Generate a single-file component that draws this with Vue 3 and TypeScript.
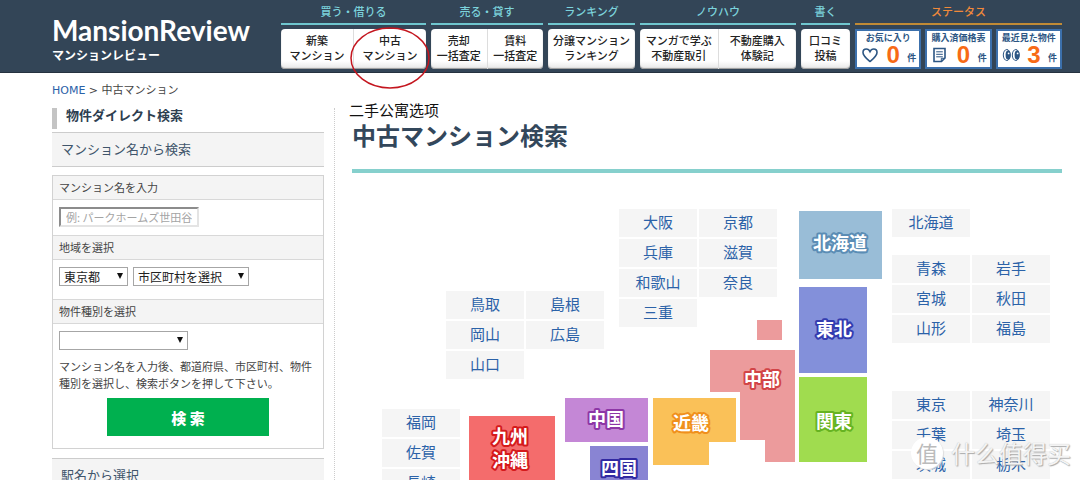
<script setup lang="ts">
import { ref } from 'vue'

interface NavItem { lines: string[]; current?: boolean }
interface NavGroup { title: string; size: string; items: NavItem[] }
interface PrefGroup { name: string; x: number; y: number; prefs: string[] }
interface Region { id: string; points: string; labels: { text: string; x: number; y: number }[] }

const navGroups: NavGroup[] = [
  { title: '買う・借りる', size: 'buy', items: [{ lines: ['新築', 'マンション'] }, { lines: ['中古', 'マンション'], current: true }] },
  { title: '売る・貸す', size: 'sell', items: [{ lines: ['売却', '一括査定'] }, { lines: ['賃料', '一括査定'] }] },
  { title: 'ランキング', size: 'rank', items: [{ lines: ['分譲マンション', 'ランキング'] }] },
  { title: 'ノウハウ', size: 'know', items: [{ lines: ['マンガで学ぶ', '不動産取引'] }, { lines: ['不動産購入', '体験記'] }] },
  { title: '書く', size: 'write', items: [{ lines: ['口コミ', '投稿'] }] },
]

const statuses = [
  { id: 'heart', title: 'お気に入り', count: 0 },
  { id: 'doc', title: '購入済価格表', count: 0 },
  { id: 'eyes', title: '最近見た物件', count: 3 },
]

// Coordinates are relative to the map canvas.
const prefGroups: PrefGroup[] = [
  { name: '近畿', x: 267, y: 9, prefs: ['大阪', '京都', '兵庫', '滋賀', '和歌山', '奈良', '三重'] },
  { name: '中国', x: 94, y: 91, prefs: ['鳥取', '島根', '岡山', '広島', '山口'] },
  { name: '北海道', x: 540, y: 9, prefs: ['北海道'] },
  { name: '東北', x: 540, y: 55, prefs: ['青森', '岩手', '宮城', '秋田', '山形', '福島'] },
  { name: '関東', x: 540, y: 191, prefs: ['東京', '神奈川', '千葉', '埼玉', '茨城', '栃木'] },
]
const kyushuPrefs = ['福岡', '佐賀', '長崎']

const regions: Region[] = [
  { id: 'hokkaido', points: '447,11 530,11 530,79 447,79', labels: [{ text: '北海道', x: 488, y: 50 }] },
  { id: 'tohoku', points: '447,87 515,87 515,173 447,173', labels: [{ text: '東北', x: 482, y: 136 }] },
  { id: 'kanto', points: '447,177 515,177 515,262 447,262', labels: [{ text: '関東', x: 482, y: 228 }] },
  { id: 'chubu', points: '358,150 443,150 443,262 413,262 413,240 388,240 388,192 358,192', labels: [{ text: '中部', x: 410, y: 186 }] },
  { id: 'kinki', points: '301,198 384,198 384,242 357,242 357,265 301,265', labels: [{ text: '近畿', x: 339, y: 230 }] },
  { id: 'chugoku', points: '213,198 296,198 296,242 213,242', labels: [{ text: '中国', x: 254, y: 226 }] },
  { id: 'shikoku', points: '238,246 296,246 296,304 238,304', labels: [{ text: '四国', x: 267, y: 275 }] },
  { id: 'kyushu', points: '117,216 203,216 203,304 117,304', labels: [{ text: '九州', x: 158, y: 243 }, { text: '沖縄', x: 158, y: 267 }] },
]

const mansionName = ref('')
const prefecture = ref('東京都')
const city = ref('市区町村を選択')
const kind = ref('')
</script>

<template>
  <div class="page">
    <header class="header">
      <a class="logo" href="#">
        <span class="logo-name">MansionReview</span>
        <span class="logo-sub">マンションレビュー</span>
      </a>
      <nav class="nav">
        <section v-for="g in navGroups" :key="g.title" class="group" :class="g.size">
          <h2 class="group-title">{{ g.title }}</h2>
          <div class="group-items">
            <a v-for="item in g.items" :key="item.lines.join()" class="nav-item" href="#">
              <span v-for="line in item.lines" :key="line">{{ line }}</span>
              <svg v-if="item.current" class="ring" viewBox="0 0 80 62" aria-hidden="true">
                <ellipse cx="40" cy="31" rx="39" ry="30" />
              </svg>
            </a>
          </div>
        </section>
        <section class="group status">
          <h2 class="group-title">ステータス</h2>
          <div class="status-items">
            <a v-for="s in statuses" :key="s.id" class="status-card" href="#">
              <span class="status-title">{{ s.title }}</span>
              <span class="status-row">
                <svg class="status-icon" viewBox="0 0 18 16" aria-hidden="true">
                  <path v-if="s.id === 'heart'" class="line" d="M9 14.5C5.5 11.5 2 8.8 2 5.4C2 3.3 3.6 2 5.3 2C7 2 8.3 3 9 4.6C9.7 3 11 2 12.7 2C14.4 2 16 3.3 16 5.4C16 8.8 12.5 11.5 9 14.5Z" />
                  <template v-else-if="s.id === 'doc'">
                    <path class="line" d="M3 1.5H14V11L10.5 14.5H3Z" />
                    <path class="thin" d="M5.2 4.8H11.8M5.2 7.3H11.8M5.2 9.8H11.8M10.3 14.3V11.3H13.8" />
                  </template>
                  <template v-else>
                    <ellipse class="thin" cx="4.8" cy="8" rx="3.5" ry="5.5" />
                    <ellipse class="thin" cx="13.8" cy="8" rx="3.5" ry="5.5" />
                    <ellipse class="fill" cx="6" cy="8" rx="2.4" ry="4.6" />
                    <ellipse class="fill" cx="15" cy="8" rx="2.4" ry="4.6" />
                    <circle class="glint" cx="6.6" cy="6.4" r="0.9" />
                    <circle class="glint" cx="15.6" cy="6.4" r="0.9" />
                  </template>
                </svg>
                <strong class="count">{{ s.count }}</strong>
                <span class="unit">件</span>
              </span>
            </a>
          </div>
        </section>
      </nav>
    </header>

    <div class="crumbs"><a href="#">HOME</a> &gt; 中古マンション</div>

    <div class="columns">
      <aside class="side">
        <h2 class="side-title">物件ダイレクト検索</h2>
        <h3 class="side-section">マンション名から検索</h3>
        <form class="search" @submit.prevent>
          <label class="field-title" for="mansion-name">マンション名を入力</label>
          <div class="field name-field">
            <input id="mansion-name" v-model="mansionName" class="name-input" type="text" placeholder="例: パークホームズ世田谷">
          </div>
          <label class="field-title" for="prefecture">地域を選択</label>
          <div class="field area-field">
            <span class="select pref-select">
              <select id="prefecture" v-model="prefecture"><option>東京都</option></select>
            </span>
            <span class="select city-select">
              <select v-model="city" aria-label="市区町村"><option>市区町村を選択</option></select>
            </span>
          </div>
          <label class="field-title" for="kind">物件種別を選択</label>
          <div class="field kind-field">
            <span class="select kind-select">
              <select id="kind" v-model="kind"><option value=""></option></select>
            </span>
          </div>
          <p class="help">マンション名を入力後、都道府県、市区町村、物件種別を選択し、検索ボタンを押して下さい。</p>
          <button class="submit" type="submit">検 索</button>
        </form>
        <h3 class="side-section">駅名から選択</h3>
      </aside>

      <main class="main">
        <p class="note" lang="zh-CN">二手公寓选项</p>
        <h1 class="title">中古マンション検索</h1>
        <div class="map">
          <svg class="regions" viewBox="0 0 710 304" role="img" aria-label="地域マップ">
            <rect class="chubu" x="405" y="120" width="25" height="20" />
            <g v-for="r in regions" :key="r.id" :class="r.id">
              <polygon :points="r.points" />
              <text v-for="l in r.labels" :key="l.text" :x="l.x" :y="l.y">{{ l.text }}</text>
            </g>
          </svg>
          <div v-for="g in prefGroups" :key="g.name" class="prefs" :style="{ left: g.x + 'px', top: g.y + 'px' }">
            <a v-for="p in g.prefs" :key="p" class="pref" href="#">{{ p }}</a>
          </div>
          <div class="prefs single" :style="{ left: '30px', top: '209px' }">
            <a v-for="p in kyushuPrefs" :key="p" class="pref" href="#">{{ p }}</a>
          </div>
        </div>
      </main>
    </div>

    <div class="watermark" lang="zh-CN">
      <span class="mark">值</span>
      <span class="mark-text">什么值得买</span>
    </div>
  </div>
</template>

<style>
body {
  background: #fff;
}
</style>

<style scoped>
.page {
  position: relative;
  height: 100vh;
  overflow: hidden;
  font-family: "Noto Sans CJK JP", sans-serif;
  font-size: 11px;
  color: #444;
}
.page * {
  box-sizing: border-box;
}
h1, h2, h3, p {
  margin: 0;
  font-weight: normal;
}
a {
  text-decoration: none;
  color: #2b62a8;
}
.header {
  display: flex;
  justify-content: space-between;
  height: 73px;
  padding: 0 18px 0 52px;
  background: #334557;
  border-bottom: 1px solid #25323f;
}
.logo {
  display: flex;
  flex-direction: column;
  padding-top: 12px;
  color: #fff;
}
.logo-name {
  font-family: Lato, sans-serif;
  font-size: 28px;
  font-weight: 700;
  line-height: 36px;
}
.logo-sub {
  font-size: 12px;
  font-weight: 700;
  line-height: 14px;
}
.nav {
  display: flex;
  gap: 5px;
}
.buy { width: 145px; }
.sell { width: 112px; }
.rank { width: 87px; }
.know { width: 156px; }
.write { width: 49px; }
.status { width: 207px; }
.group-title {
  height: 25px;
  margin-bottom: 4px;
  border-bottom: 2px solid #6fc6cf;
  color: #7cd3dc;
  font-size: 11px;
  font-weight: 500;
  line-height: 23px;
  text-align: center;
}
.status .group-title {
  border-color: #c08a35;
  color: #f0893a;
}
.group-items {
  display: flex;
  height: 40px;
  border-radius: 4px;
  background: linear-gradient(#fff 80%, #e6e6e6);
  box-shadow: inset 0 -1px 1px #999;
}
.nav-item {
  position: relative;
  flex: 1;
  display: flex;
  flex-direction: column;
  align-items: center;
  padding-top: 4px;
  color: #222;
  font-weight: 500;
  line-height: 15px;
  white-space: nowrap;
}
.nav-item + .nav-item {
  border-left: 1px solid #ddd;
}
.ring {
  position: absolute;
  z-index: 2;
  top: -2px;
  left: -4px;
  width: 80px;
  height: 62px;
}
.ring ellipse {
  fill: none;
  stroke: #c4161f;
  stroke-width: 1.5;
}
.status-items {
  display: flex;
  gap: 4px;
}
.status-card {
  flex: 1;
  height: 40px;
  padding-top: 1px;
  border: 2px solid #3c70ac;
  background: #fff;
  color: #2c5684;
  text-align: center;
}
.status-title {
  display: block;
  font-size: 9px;
  font-weight: 700;
  line-height: 12px;
  white-space: nowrap;
}
.status-row {
  display: flex;
  align-items: center;
  justify-content: space-between;
  height: 22px;
  padding: 0 3px 0 4px;
}
.status-icon {
  width: 18px;
  height: 16px;
}
.line {
  fill: none;
  stroke: #2c5684;
  stroke-width: 1.6;
}
.thin {
  fill: none;
  stroke: #2c5684;
  stroke-width: 1;
}
.fill { fill: #2c5684; }
.glint { fill: #fff; }
.count {
  color: #f76b16;
  font-family: "Liberation Sans Narrow", "Liberation Sans", Arial, sans-serif;
  font-size: 24px;
  line-height: 20px;
}
.unit {
  align-self: flex-end;
  font-size: 9px;
  font-weight: 700;
  line-height: 16px;
}
.crumbs {
  height: 35px;
  padding: 9px 52px 0;
  font-family: "DejaVu Sans", "Noto Sans CJK JP", sans-serif;
  line-height: 18px;
}
.columns {
  display: flex;
  padding: 0 18px 0 52px;
}
.side {
  flex: none;
  width: 283px;
  padding-right: 10px;
  border-right: 1px dotted #ccc;
}
.side-title {
  height: 21px;
  margin-bottom: 3px;
  padding-left: 9px;
  border-left: 5px solid #c4c4c4;
  color: #2d3e50;
  font-size: 13px;
  font-weight: 700;
  line-height: 13px;
}
.side-section {
  height: 35px;
  padding-left: 9px;
  border: solid #ccc;
  border-width: 1px 0;
  background: #f4f4f4;
  color: #40556b;
  font-size: 13px;
  line-height: 31px;
}
.search {
  margin: 8px 0 9px;
  padding-bottom: 12px;
  border: 1px solid #d2d2d2;
}
.field-title {
  display: block;
  height: 24px;
  padding-left: 6px;
  border-bottom: 1px solid #d8d8d8;
  background: #f4f4f4;
  line-height: 22px;
}
.field + .field-title {
  height: 25px;
  border-top: 1px solid #d8d8d8;
}
.field {
  display: flex;
  gap: 5px;
  padding: 7px 6px;
}
.name-field { height: 35px; }
.area-field { height: 39px; }
.kind-field { height: 34px; }
.name-input {
  width: 140px;
  height: 20px;
  padding: 0 5px;
  border: 2px solid;
  border-color: #8c8c8c #e4e4e4 #e4e4e4 #8c8c8c;
  background: #fff;
  font-family: inherit;
  font-size: 11px;
  line-height: 16px;
  color: #444;
}
.name-input::placeholder {
  color: #a4a4a4;
}
.select {
  position: relative;
  height: 19px;
}
.select::after {
  content: "";
  position: absolute;
  top: 6px;
  right: 5px;
  border: solid transparent;
  border-width: 6px 3px 0;
  border-top-color: #111;
  pointer-events: none;
}
.select select {
  display: block;
  width: 100%;
  height: 19px;
  padding: 0 4px;
  border: 1px solid #a6a6a6;
  border-radius: 0;
  appearance: none;
  background: #fff;
  color: #222;
  font-family: inherit;
  font-size: 12px;
  line-height: 17px;
}
.pref-select { width: 69px; }
.city-select { width: 116px; }
.kind-select { width: 129px; }
.help {
  padding: 0 6px;
  line-height: 17px;
}
.submit {
  display: block;
  width: 60%;
  height: 38px;
  margin: 6px auto 0;
  border: 0;
  background: #00b04f;
  color: #fff;
  font-family: inherit;
  font-size: 15px;
  font-weight: 900;
}
.main {
  position: relative;
  flex: 1;
  margin-left: 17px;
}
.note {
  position: absolute;
  top: -8px;
  left: -3px;
  color: #111;
  font-family: "Noto Sans CJK SC", sans-serif;
  font-size: 15px;
  line-height: 20px;
}
.title {
  height: 65px;
  padding-top: 11px;
  border-bottom: 4px solid #86d0cd;
  color: #33475b;
  font-size: 24px;
  font-weight: 700;
  line-height: 32px;
}
.map {
  position: relative;
  height: 304px;
  margin-top: 27px;
}
.regions {
  position: absolute;
  top: 0;
  left: 0;
  width: 710px;
  height: 304px;
}
.regions text {
  fill: #fff;
  stroke-width: 4;
  stroke-linejoin: round;
  paint-order: stroke;
  font-size: 18px;
  font-weight: 700;
  text-anchor: middle;
}
.hokkaido { fill: #99bdd7; stroke: #5b8db5; }
.tohoku { fill: #8390da; stroke: #333cb0; }
.kanto { fill: #a0dc4f; stroke: #66b321; }
.chubu { fill: #ec9b9c; stroke: #d24447; }
.kinki { fill: #fac158; stroke: #f0901c; }
.chugoku { fill: #c487d6; stroke: #8d36a6; }
.shikoku { fill: #8984d3; stroke: #3129a2; }
.kyushu { fill: #f46c6c; stroke: #d51a1c; }
.regions polygon, .regions rect {
  stroke: none;
}
.prefs {
  position: absolute;
  display: grid;
  grid-template-columns: 78px 78px;
  gap: 2px;
}
.single {
  grid-template-columns: 78px;
}
.pref {
  height: 28px;
  background: #f5f5f5;
  font-size: 15px;
  line-height: 25px;
  text-align: center;
}
.watermark {
  position: absolute;
  right: 9px;
  bottom: 11px;
  display: flex;
  align-items: center;
  gap: 8px;
  font-family: "Noto Sans CJK SC", sans-serif;
  pointer-events: none;
}
.mark {
  width: 32px;
  height: 32px;
  border-radius: 50%;
  background: #fff;
  box-shadow: 1px 1px 1px #ddd;
  color: #bbb;
  font-size: 22px;
  line-height: 31px;
  text-align: center;
}
.mark-text {
  color: #f4f4f4;
  font-size: 24px;
  line-height: 32px;
  text-shadow: 1px 1px 1px #aaa, 0 0 1px #bbb;
}
</style>
